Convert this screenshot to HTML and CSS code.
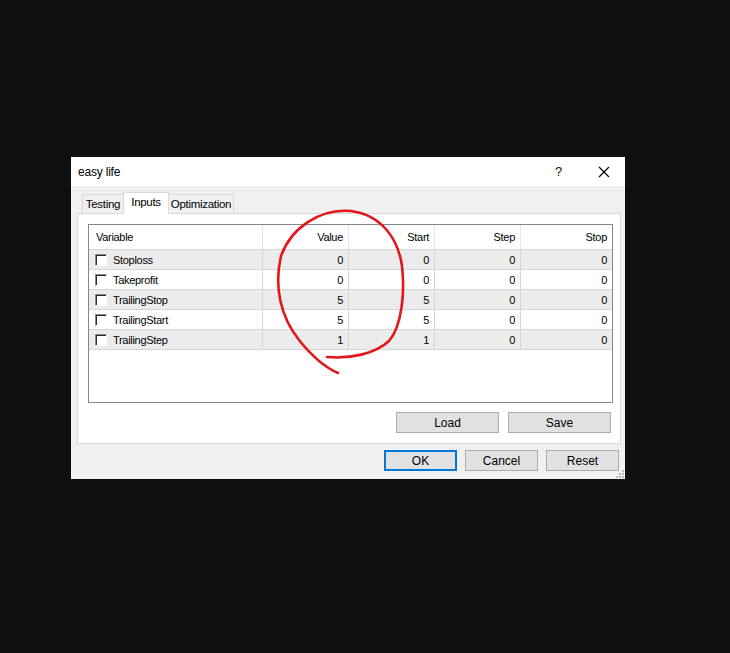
FILE: index.html
```html
<!DOCTYPE html>
<html lang="en">

<head>
    <meta charset="UTF-8">
    <title>easy life</title>
    <link rel="stylesheet" href="styles.css">
</head>

<body>
    <div class="dialog">
        <div class="titlebar">
            <span class="title">easy life</span>
            <span class="help">?</span>
            <span class="close">
                <svg width="12" height="12" viewBox="0 0 12 12">
                    <path d="M1 1 L11 11 M11 1 L1 11" stroke="#000" stroke-width="1.1" fill="none" />
                </svg>
            </span>
        </div>

        <div class="tabs">
            <div class="tab tab-testing">Testing</div>
            <div class="tab tab-inputs active">Inputs</div>
            <div class="tab tab-optim">Optimization</div>
        </div>

        <div class="panel">
            <div class="grid">
                <div class="row head">
                    <div class="cell name">Variable</div>
                    <div class="cell num">Value</div>
                    <div class="cell num">Start</div>
                    <div class="cell num">Step</div>
                    <div class="cell num">Stop</div>
                </div>
                <div class="row shade">
                    <div class="cell name"><span class="check"></span>Stoploss</div>
                    <div class="cell num">0</div>
                    <div class="cell num">0</div>
                    <div class="cell num">0</div>
                    <div class="cell num">0</div>
                </div>
                <div class="row">
                    <div class="cell name"><span class="check"></span>Takeprofit</div>
                    <div class="cell num">0</div>
                    <div class="cell num">0</div>
                    <div class="cell num">0</div>
                    <div class="cell num">0</div>
                </div>
                <div class="row shade">
                    <div class="cell name"><span class="check"></span>TrailingStop</div>
                    <div class="cell num">5</div>
                    <div class="cell num">5</div>
                    <div class="cell num">0</div>
                    <div class="cell num">0</div>
                </div>
                <div class="row">
                    <div class="cell name"><span class="check"></span>TrailingStart</div>
                    <div class="cell num">5</div>
                    <div class="cell num">5</div>
                    <div class="cell num">0</div>
                    <div class="cell num">0</div>
                </div>
                <div class="row shade">
                    <div class="cell name"><span class="check"></span>TrailingStep</div>
                    <div class="cell num">1</div>
                    <div class="cell num">1</div>
                    <div class="cell num">0</div>
                    <div class="cell num">0</div>
                </div>
            </div>

            <div class="panel-buttons">
                <button class="btn wide">Load</button>
                <button class="btn wide">Save</button>
            </div>
        </div>

        <div class="footer">
            <button class="btn default">OK</button>
            <button class="btn">Cancel</button>
            <button class="btn">Reset</button>
        </div>

        <!-- red marker drawn over the Value/Start columns -->
        <svg class="markup" viewBox="71 157 554 322" width="554" height="322">
            <path d="M327 357 C350 359 375 354 389 341 C402 326 405 292 402 266 C398 238 381 215 351 211 C320 208 291 228 281 256 C274 286 280 316 299 340 C311 355 324 367 338 373"
                stroke="#e3161b" stroke-width="2.6" fill="none" stroke-linecap="round" />
        </svg>

        <svg class="grip" width="8" height="8" viewBox="0 0 8 8">
            <rect x="6" y="0" width="2" height="2" fill="#bcbcbc" />
            <rect x="3" y="3" width="2" height="2" fill="#bcbcbc" />
            <rect x="6" y="3" width="2" height="2" fill="#bcbcbc" />
            <rect x="0" y="6" width="2" height="2" fill="#bcbcbc" />
            <rect x="3" y="6" width="2" height="2" fill="#bcbcbc" />
            <rect x="6" y="6" width="2" height="2" fill="#bcbcbc" />
        </svg>
    </div>
</body>
</html>
```

FILE: styles.css
```css
body {
    margin: 0;
    padding: 157px 0 0 71px;
    background-color: #0f0f0f;
    font-family: "Liberation Sans", Arial, sans-serif;
    font-size: 11px;
    color: #000;
}

.dialog {
    position: relative;
    width: 554px;
    height: 322px;
    background-color: #f0f0f0;
}

/* title bar */
.titlebar {
    display: flex;
    align-items: center;
    height: 29px;
    background-color: #fff;
}

.titlebar .title {
    flex: 1;
    padding-left: 7px;
    font-size: 12px;
    letter-spacing: -0.2px;
}

.titlebar .help {
    width: 12px;
    font-size: 13px;
    margin-right: 31px;
    color: #111;
}

.titlebar .close {
    display: flex;
    margin-right: 15px;
}

/* tabs */
.tabs {
    display: flex;
    align-items: flex-end;
    height: 28px;
    margin-bottom: -1px;
    padding-left: 11px;
    position: relative;
    z-index: 1;
}

.tab {
    box-sizing: border-box;
    height: 19px;
    margin-bottom: 1px;
    border: 1px solid #d9d9d9;
    border-bottom: none;
    background-color: #f0f0f0;
    font-size: 11.5px;
    line-height: 18px;
    text-align: center;
    letter-spacing: -0.3px;
    white-space: nowrap;
}

.tab-testing {
    width: 42px;
}

.tab-inputs {
    width: 46px;
    margin-left: -1px;
}

.tab-optim {
    width: 66px;
    margin-left: -1px;
}

.tab.active {
    height: 22px;
    margin-bottom: 0;
    background-color: #fff;
    line-height: 19px;
    position: relative;
    z-index: 2;
}

/* tab page */
.panel {
    box-sizing: border-box;
    width: 544px;
    height: 231px;
    margin-left: 6px;
    padding: 10px 9px 0 10px;
    background-color: #fff;
    border: 1px solid #d9d9d9;
}

.grid {
    box-sizing: border-box;
    width: 525px;
    height: 179px;
    border: 1px solid #828790;
    background-color: #fff;
}

.row {
    box-sizing: border-box;
    display: grid;
    grid-template-columns: 174px 86px 86px 86px 91px;
    height: 20px;
    border-bottom: 1px solid #d6d6d6;
}

.row.head {
    height: 25px;
}

.row.shade {
    background-color: #ececec;
}

.cell {
    box-sizing: border-box;
    display: flex;
    align-items: center;
    border-right: 1px solid #d6d6d6;
    letter-spacing: -0.3px;
    white-space: nowrap;
}

.head .cell {
    border-right-color: #e8e8e8;
}

.cell:last-child {
    border-right: none;
}

.cell.name {
    padding-left: 6px;
}

.head .cell.name {
    padding-left: 7px;
}

.cell.num {
    justify-content: flex-end;
    padding-right: 5px;
}

.check {
    box-sizing: border-box;
    width: 12px;
    height: 12px;
    margin-right: 6px;
    background-color: #fff;
    border-top: 1px solid #8a8a8a;
    border-left: 1px solid #8a8a8a;
    border-right: 1px solid #fff;
    border-bottom: 1px solid #fff;
    box-shadow: inset 1px 1px 0 #2b2b2b;
}

/* buttons */
.btn {
    box-sizing: border-box;
    width: 73px;
    height: 21px;
    padding: 0;
    background-color: #e1e1e1;
    border: 1px solid #adadad;
    font-family: "Liberation Sans", Arial, sans-serif;
    font-size: 12px;
    color: #000;
}

.btn.wide {
    width: 103px;
}

.btn.default {
    border: 2px solid #0078d7;
}

.panel-buttons {
    display: flex;
    justify-content: flex-end;
    gap: 9px;
    margin-top: 9px;
}

.footer {
    display: flex;
    justify-content: flex-end;
    gap: 8px;
    margin-top: 6px;
    padding-right: 6px;
}

.markup {
    position: absolute;
    left: 0;
    top: 0;
    pointer-events: none;
}

.grip {
    position: absolute;
    right: 1px;
    bottom: 1px;
}
```
